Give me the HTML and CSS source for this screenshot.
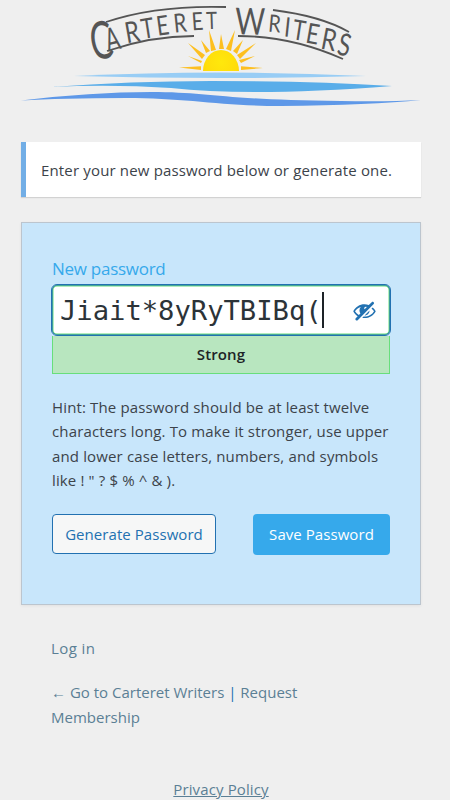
FILE: index.html
```html
<!DOCTYPE html>
<html lang="en">
<head>
<meta charset="utf-8">
<meta name="viewport" content="width=device-width, initial-scale=1">
<title>Reset Password</title>
<link rel="stylesheet" href="styles.css">
</head>
<body>
<main class="login">
  <svg class="logo" viewBox="0 0 400 106" role="img" aria-label="Carteret Writers">
    <defs>
      <radialGradient id="sun" cx="200" cy="62" r="31" gradientUnits="userSpaceOnUse">
        <stop offset="0" stop-color="#ffe80c"/><stop offset=".55" stop-color="#ffdc0b"/><stop offset="1" stop-color="#fcb91e"/>
      </radialGradient>
    </defs>
    <path class="ray" d="M180 66.200l-22 1.300 22 2.500zM181 61l-14-5 13 7zM184 55l-17-12 14 16zM189 51l-9-11 5 13zM195 50l-7-20 2 21zM198 49l2-15 3 15zM205 49l9-19-4 21zM212 51l10-11-6 14zM216 55l19-12-16 16zM218 60l16-4-14 7zM220 66.200l22 1.800-22 2z"/>
    <path fill="url(#sun)" d="M182 71a18 21 0 0 1 36 0z"/>
    <path fill="#98cdf5" d="M53 76Q200 69 345 76Q200 80 53 76z"/>
    <path fill="#59ade9" d="M30 87Q110 81 190 81Q290 81 371 86Q230 97 150 88Q90 84 30 87z"/>
    <path fill="#5e98e8" d="M0 100.500Q70 92 130 92C190 92 200 100 320 101Q365 102 400 100Q350 105 260 106C200 106 165 98 105 98Q40 98 0 100.500z"/>
    <path class="arc" d="M85 22Q135 5 205 7M86 51Q130 36 173 36M217 36Q270 36 322 59M252 10Q300 16 328 32"/>
    <g class="letters">
      <text transform="translate(83 58.500) rotate(-9) scale(.64 1)" font-size="52">C</text>
      <text transform="translate(94 50) rotate(-14) scale(.65 1)" font-size="32">A</text>
      <text transform="translate(113 42) rotate(-10) scale(.8 1)" font-size="29">R</text>
      <text transform="translate(128 38) rotate(-9) scale(.77 1)" font-size="28">T</text>
      <text transform="translate(143 35) rotate(-8) scale(.8 1)" font-size="27">E</text>
      <text transform="translate(160 32) rotate(-6) scale(.8 1)" font-size="26">R</text>
      <text transform="translate(177 30) rotate(-4) scale(.8 1)" font-size="25">E</text>
      <text transform="translate(191 29) rotate(-2) scale(.77 1)" font-size="24">T</text>
      <text transform="translate(229 34.500) rotate(1) scale(.78 1)" font-size="37">W</text>
      <text transform="translate(253 32) rotate(5) scale(.82 1)" font-size="24">R</text>
      <text transform="translate(265.500 36.500) rotate(6) scale(.8 1)" font-size="27">I</text>
      <text transform="translate(276.500 40) rotate(9) scale(.77 1)" font-size="28">T</text>
      <text transform="translate(290 43.500) rotate(10) scale(.8 1)" font-size="28">E</text>
      <text transform="translate(306 50) rotate(11) scale(.8 1)" font-size="30">R</text>
      <text transform="translate(321 55.500) rotate(13) scale(.74 1)" font-size="31">S</text>
    </g>
  </svg>

  <p class="notice">Enter your new password below or generate one.</p>

  <form class="card">
    <label class="label" for="pass">New password</label>
    <div class="field">
      <span class="value" id="pass">Jiait*8yRyTBIBq(</span><span class="caret"></span>
      <svg class="eye" viewBox="0 0 20 20" aria-hidden="true"><path d="M17.2 3.3l.16.17c.39.39.39 1.02 0 1.41L4.55 17.7c-.39.39-1.03.39-1.41 0l-.17-.17c-.39-.39-.39-1.02 0-1.41l1.59-1.6c-1.57-1-2.76-2.3-3.56-3.93.81-1.65 2.03-2.98 3.64-3.99S8.04 5.09 10 5.09c1.2 0 2.33.21 3.4.6l2.38-2.39c.39-.39 1.03-.39 1.42 0zm-7.09 4.01c-.23.25-.34.54-.34.88 0 .31.12.58.31.81l1.8-1.79c-.13-.12-.28-.21-.45-.26-.11-.01-.28-.03-.49-.04-.33.03-.6.16-.83.4zM2.4 10.59c.69 1.23 1.71 2.25 3.05 3.05l1.28-1.28c-.51-.69-.77-1.47-.77-2.36 0-1.06.36-1.98 1.09-2.76-1.04.27-1.96.7-2.76 1.26-.8.58-1.43 1.27-1.89 2.09zm13.22-2.13l.96-.96c1.02.86 1.83 1.89 2.42 3.09-.81 1.65-2.03 2.98-3.64 3.99s-3.4 1.51-5.36 1.51c-.63 0-1.24-.07-1.83-.18l1.07-1.07c.25.02.5.05.76.05 1.63 0 3.13-.4 4.5-1.21s2.4-1.84 3.1-3.09c-.46-.82-1.09-1.51-1.89-2.09-.03-.01-.06-.03-.09-.04zm-5.58 5.58l4-4c-.01 1.1-.41 2.04-1.18 2.81-.78.78-1.72 1.18-2.82 1.19z"/></svg>
    </div>
    <div class="strength">Strong</div>
    <p class="hint">Hint: The password should be at least twelve<br>characters long. To make it stronger, use upper<br>and lower case letters, numbers, and symbols<br>like ! " ? $ % ^ &amp; ).</p>
    <div class="actions">
      <button class="btn generate" type="button">Generate Password</button>
      <button class="btn save" type="button">Save Password</button>
    </div>
  </form>

  <nav class="links">
    <p class="signin"><a>Log in</a></p>
    <p><a>← Go to Carteret Writers</a><span class="sep"> | </span><a>Request</a><br><a>Membership</a></p>
  </nav>
  <p class="privacy"><a>Privacy Policy</a></p>
</main>
</body>
</html>
```
FILE: styles.css
```css
* { box-sizing: border-box; }
body {
  margin: 0;
  height: 800px;
  overflow: hidden;
  background: #efefef;
  color: #3c434a;
  font: 15px/24.4px "Open Sans", "Noto Sans", sans-serif;
}
p { margin: 0; }
.login { width: 400px; margin-left: 21px; }
.logo { display: block; width: 400px; height: 106px; overflow: visible; }
.ray { fill: #fdbf20; }
.arc { fill: none; stroke: #555; stroke-width: 1.8; }
.letters { fill: #555; font-family: Lato, sans-serif; font-weight: 400; text-anchor: middle; }
.notice {
  height: 55px;
  margin-top: 36px;
  padding: 16px 15px;
  border-left: 5px solid #72aee6;
  background: #fff;
  box-shadow: 0 1px 1px rgba(0, 0, 0, .12);
  letter-spacing: .16px;
  white-space: nowrap;
}
.card {
  height: 383px;
  margin-top: 25px;
  padding: 33px 30px 0;
  border: 1px solid #bcc5ce;
  background: #c8e6fb;
  box-shadow: 0 1px 3px rgba(0, 0, 0, .06);
}
.label { display: block; height: 28px; line-height: 26px; font-size: 17px; letter-spacing: -.27px; color: #36a9eb; }
.field {
  display: flex;
  align-items: center;
  height: 52px;
  margin: 0 -1px;
  padding: 0 13px 0 8px;
  border: 1px solid #2271b1;
  border-radius: 6px;
  background: #fff;
  box-shadow: inset 0 0 0 .6px #2271b1, inset 0 0 0 1.5px #68de7c;
}
.value { padding-top: 1px; font: 27.2px/48px "DejaVu Sans Mono", monospace; letter-spacing: -.02px; color: #2c3338; }
.caret { width: 2px; height: 36px; background: #1d2327; }
.eye { width: 25px; height: 25px; margin-left: auto; fill: #2271b1; }
.strength {
  height: 38px;
  border: 1px solid #68de7c;
  border-top: 0;
  background: #b8e6bf;
  color: #1d2327;
  font-weight: 600;
  letter-spacing: .1px;
  line-height: 37px;
  text-align: center;
}
.hint { height: 98px; margin-top: 21px; letter-spacing: .14px; white-space: nowrap; }
.actions { display: flex; justify-content: space-between; align-items: flex-start; margin-top: 21px; }
.btn { padding: 0; border-radius: 4px; font: inherit; letter-spacing: .06px; text-align: center; white-space: nowrap; }
.generate { width: 164px; height: 40px; border: 1px solid #2271b1; background: #f6f7f7; color: #2271b1; }
.save { width: 137px; height: 41px; border: 0; background: #36a9eb; color: #fff; }
.links { margin: 31px 0 0 30px; color: #5b7f95; }
.signin { letter-spacing: .4px; }
.links p + p { margin-top: 20px; }
.sep { color: #2271b1; }
.privacy { margin-top: 48px; letter-spacing: .12px; text-align: center; color: #5b7f95; }
.privacy a { text-decoration: underline; }
```
